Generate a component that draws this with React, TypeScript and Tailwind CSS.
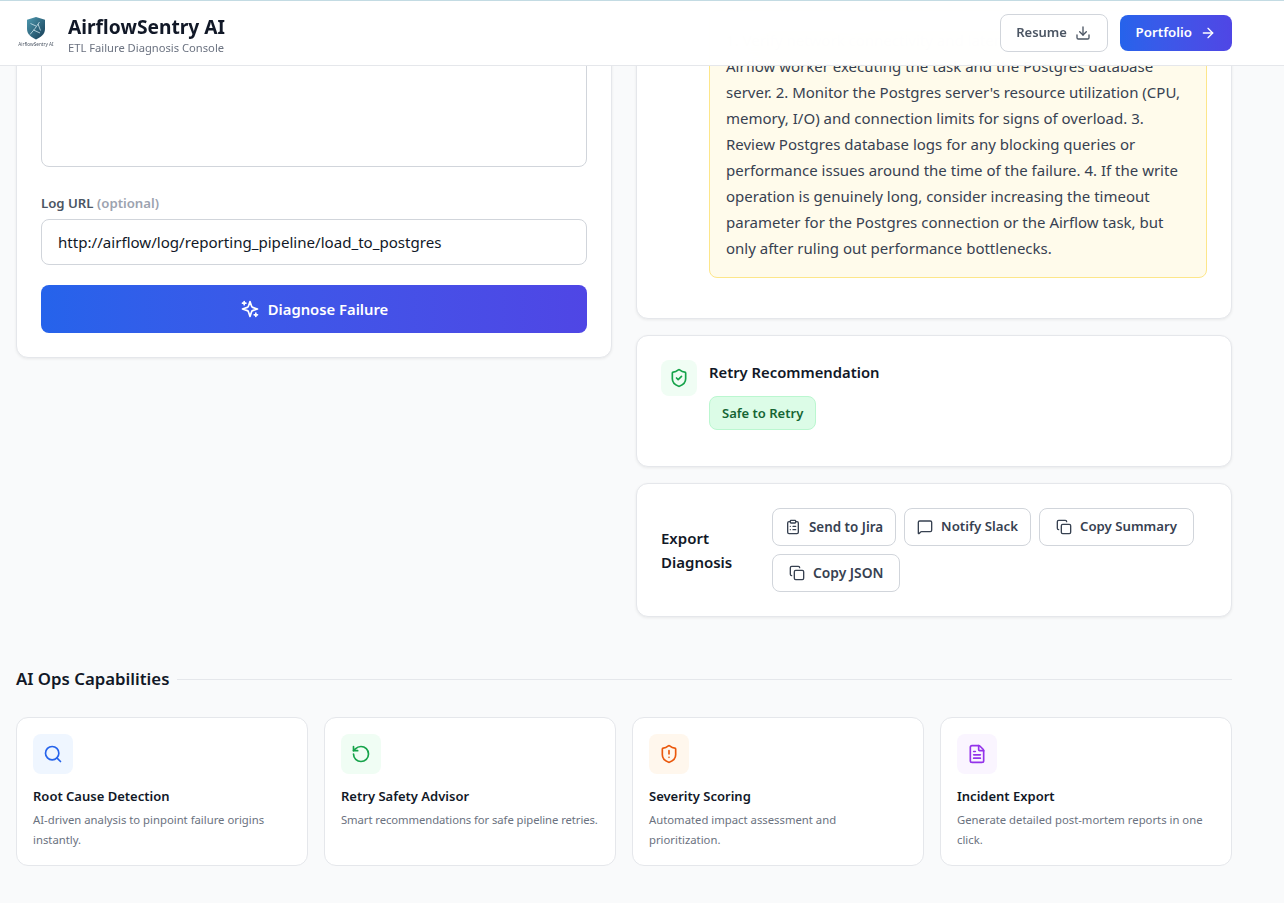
import { ArrowRight, Download, Search, RotateCcw, ShieldAlert, FileText, ShieldCheck, ClipboardList, MessageSquare, Copy } from "lucide-react";

const caps = [
  { t: "Root Cause Detection", d: "AI-driven analysis to pinpoint failure origins instantly.", I: Search, bg: "bg-[#eff6ff]", c: "text-[#2563eb]", x: "" },
  { t: "Retry Safety Advisor", d: "Smart recommendations for safe pipeline retries.", I: RotateCcw, bg: "bg-[#f0fdf4]", c: "text-[#16a34a]", x: "whitespace-nowrap tracking-[-0.08px]" },
  { t: "Severity Scoring", d: "Automated impact assessment and prioritization.", I: ShieldAlert, bg: "bg-[#fff7ed]", c: "text-[#ea580c]", x: "" },
  { t: "Incident Export", d: "Generate detailed post-mortem reports in one click.", I: FileText, bg: "bg-[#faf5ff]", c: "text-[#9333ea]", x: "" },
];

const fixLines = [
  "1. Verify network connectivity and latency between the",
  "Airflow worker executing the task and the Postgres database",
  "server. 2. Monitor the Postgres server's resource utilization (CPU,",
  "memory, I/O) and connection limits for signs of overload. 3.",
  "Review Postgres database logs for any blocking queries or",
  "performance issues around the time of the failure. 4. If the write",
  "operation is genuinely long, consider increasing the timeout",
  "parameter for the Postgres connection or the Airflow task, but",
  "only after ruling out performance bottlenecks.",
];

function OutlineBtn({ I, label, cls }: { I: typeof Copy; label: string; cls: string }) {
  return (
    <button className={`flex h-[38px] items-center gap-2 rounded-lg border border-[#d1d5db] bg-white font-semibold text-[#374151] ${cls}`}>
      <I size={16} strokeWidth={2} />
      {label}
    </button>
  );
}

function Logo() {
  return (
    <svg width="40" height="40" viewBox="0 0 40 40" className="shrink-0">
      <defs>
        <linearGradient id="shieldFill" x1="0" y1="0" x2="1" y2="1">
          <stop offset="0" stopColor="#4e9ab0" />
          <stop offset="1" stopColor="#163c55" />
        </linearGradient>
      </defs>
      <path d="M20 4l9 2.800v9.200c0 5.200-4 8.200-9 10.400C15 24.200 11 21.200 11 16V6.800z" fill="url(#shieldFill)" />
      <path d="M14 21.500l5-6 4.500-6.500M17.500 17l6.500 3M20 13l-5.500-2.500M22 11l2.500 6.500" stroke="#cfe6ee" strokeWidth="0.8" fill="none" />
      <text x="20" y="32.800" textAnchor="middle" fontSize="4.700" fontFamily="'Noto Sans', sans-serif" fill="#4b5563">AirflowSentry AI</text>
    </svg>
  );
}

export default function App() {
  return (
    <div className="relative h-[903px] overflow-hidden bg-[#f9fafb] font-['Noto_Sans',sans-serif] text-[#111827]">
      <header className="absolute inset-x-0 top-0 z-10 flex h-[66px] items-center justify-between border-b border-t border-b-[#e5e7eb] border-t-[#c3dbe3] bg-white/[0.97] pl-4 pr-[52px] backdrop-blur-xl">
        <div className="flex items-center gap-3">
          <Logo />
          <div className="pt-[3px]">
            <div className="text-[19.2px] font-bold leading-[26px] text-[#111827]">AirflowSentry AI</div>
            <div className="text-[11.2px] leading-[16px] text-[#6b7280]">ETL Failure Diagnosis Console</div>
          </div>
        </div>
        <div className="flex items-center gap-3">
          <button className="flex h-[38px] w-[108px] items-center justify-center gap-2 rounded-lg border border-[#d1d5db] bg-white text-[13px] font-semibold text-[#4b5563]">
            Resume <Download size={16} />
          </button>
          <button className="flex h-9 items-center gap-2 rounded-lg bg-gradient-to-r from-[#2563eb] to-[#4f46e5] px-4 text-[13.300px] font-semibold text-white">
            Portfolio <ArrowRight size={16} />
          </button>
        </div>
      </header>

      <main className="-mt-[40px] w-[1248px] px-4">
        <div className="grid grid-cols-2 items-start gap-6">
          <section className="rounded-xl border border-[#e5e7eb] bg-white p-6 shadow-[0_1px_3px_rgba(0,0,0,0.07)]">
            <div className="h-[182px] rounded-lg border border-[#d1d5db] bg-white" />
            <label className="mt-[26px] block text-[13.200px] font-semibold leading-5 text-[#4b5563]">
              Log URL <span className="text-[#9ca3af]">(optional)</span>
            </label>
            <div className="mt-[6px] flex h-[46px] items-center rounded-lg border border-[#d1d5db] px-4 text-[15.100px] text-[#111827]">
              http://airflow/log/reporting_pipeline/load_to_postgres
            </div>
            <button className="mt-5 flex h-12 w-full items-center justify-center gap-2 rounded-lg bg-gradient-to-r from-[#2563eb] to-[#4f46e5] text-[14.800px] font-semibold text-white">
              <svg width="20" height="20" viewBox="0 0 24 24" fill="none" stroke="currentColor" strokeWidth="2" strokeLinecap="round" strokeLinejoin="round">
                <path d="m12 3-1.912 5.813a2 2 0 0 1-1.275 1.275L3 12l5.813 1.912a2 2 0 0 1 1.275 1.275L12 21l1.912-5.813a2 2 0 0 1 1.275-1.275L21 12l-5.813-1.912a2 2 0 0 1-1.275-1.275L12 3Z" />
                <path d="M5 3v4M19 17v4M3 5h4M17 19h4" />
              </svg>
              Diagnose Failure
            </button>
          </section>

          <div className="flex flex-col gap-4">
            <section className="rounded-xl border border-[#e5e7eb] bg-white pb-10 pl-[72px] pr-6 pt-[49px] shadow-[0_1px_3px_rgba(0,0,0,0.07)]">
              <div className="rounded-lg border border-[#fde68a] bg-[#fffbeb] p-4 text-[15px] leading-[26px] text-[#374151]">
                {fixLines.map((l) => (
                  <div key={l} className="whitespace-nowrap">{l}</div>
                ))}
              </div>
            </section>

            <section className="flex gap-3 rounded-xl border border-[#e5e7eb] bg-white px-6 pb-9 pt-6 shadow-[0_1px_3px_rgba(0,0,0,0.07)]">
              <div className="flex h-9 w-9 items-center justify-center rounded-lg bg-[#f0fdf4] text-[#16a34a]">
                <ShieldCheck size={20} />
              </div>
              <div>
                <div className="text-[14.800px] font-semibold leading-6 text-[#111827]">Retry Recommendation</div>
                <div className="mt-3 w-fit rounded-lg border border-[#bbf7d0] bg-[#dcfce7] px-3 py-[6px] text-[13px] font-semibold leading-5 text-[#166534]">Safe to Retry</div>
              </div>
            </section>

            <section className="flex items-center rounded-xl border border-[#e5e7eb] bg-white p-6 shadow-[0_1px_3px_rgba(0,0,0,0.07)]">
              <div className="w-[111px] shrink-0 text-[15px] font-semibold leading-6 text-[#111827]">Export Diagnosis</div>
              <div className="flex flex-wrap gap-2">
                <OutlineBtn I={ClipboardList} label="Send to Jira" cls="px-3 text-[13.400px]" />
                <OutlineBtn I={MessageSquare} label="Notify Slack" cls="px-3 text-[13.300px]" />
                <OutlineBtn I={Copy} label="Copy Summary" cls="px-4 text-[13.200px]" />
                <OutlineBtn I={Copy} label="Copy JSON" cls="px-4 text-[13.800px]" />
              </div>
            </section>
          </div>
        </div>

        <div className="mt-[50px] flex items-center gap-2">
          <h2 className="text-[16.800px] font-semibold leading-6 text-[#111827]">AI Ops Capabilities</h2>
          <div className="h-px flex-1 bg-[#e5e7eb]" />
        </div>

        <div className="mt-[26px] grid grid-cols-4 gap-4">
          {caps.map(({ t, d, I, bg, c, x }) => (
            <div key={t} className="h-[149px] rounded-xl border border-[#e5e7eb] bg-white p-4">
              <div className={`flex h-10 w-10 items-center justify-center rounded-lg ${bg} ${c}`}>
                <I size={20} />
              </div>
              <div className="mt-3 text-[13px] font-semibold leading-5 text-[#111827]">{t}</div>
              <div className={`mt-1 text-[11.300px] leading-5 text-[#6b7280] ${x}`}>{d}</div>
            </div>
          ))}
        </div>
      </main>
    </div>
  );
}
